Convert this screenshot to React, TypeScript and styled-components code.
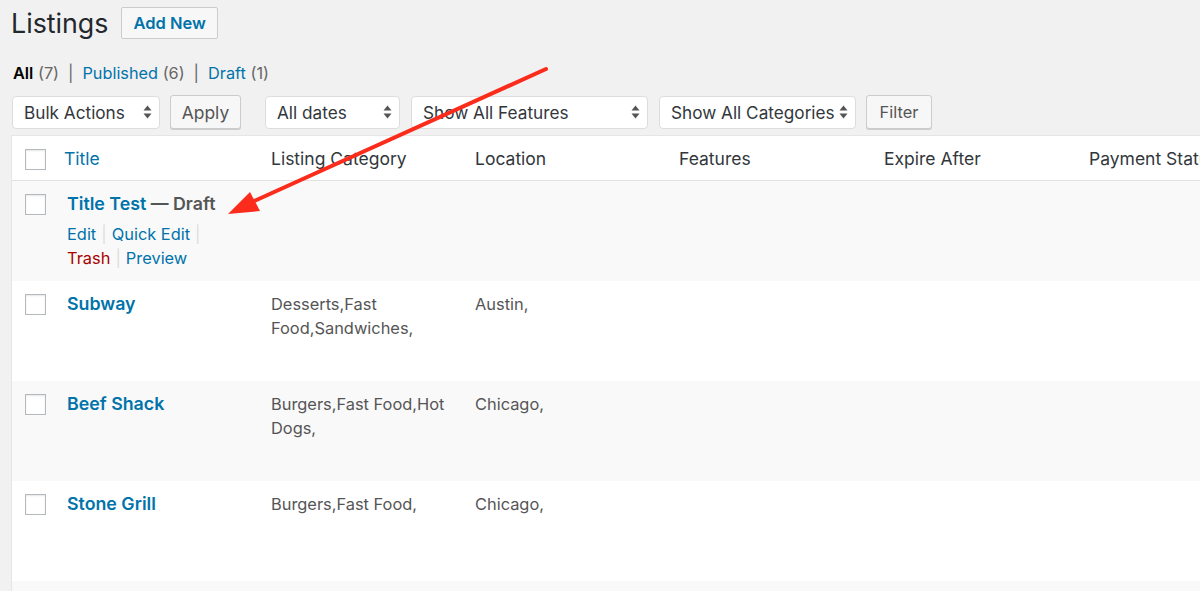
import styled, { createGlobalStyle } from 'styled-components';

const GlobalStyle = createGlobalStyle`
  html, body {
    margin: 0;
    padding: 0;
    background: #f1f1f1;
    overflow: hidden;
  }
  body {
    font-family: Inter, "Liberation Sans", Arial, sans-serif;
    color: #444;
    -webkit-font-smoothing: antialiased;
  }
`;

const Page = styled.div`
  position: relative;
  width: 1200px;
  height: 591px;
  padding-left: 11px;
  box-sizing: border-box;
  overflow: hidden;
`;

const TitleRow = styled.div`
  display: flex;
  align-items: center;
  gap: 13px;
  padding-top: 7px;
`;

const Heading = styled.h1`
  margin: 0;
  font-size: 26.8px;
  font-weight: 400;
  line-height: 32px;
  color: #23282d;
`;

const AddNew = styled.a`
  display: flex;
  align-items: center;
  height: 30px;
  padding: 0 11px;
  border: 1px solid #ccc;
  border-radius: 2px;
  background: #f7f7f7;
  color: #0073aa;
  font-size: 16.5px;
  font-weight: 600;
  text-decoration: none;
`;

const SubSub = styled.ul`
  display: flex;
  align-items: center;
  margin: 22px 0 0 2px;
  padding: 0;
  list-style: none;
  font-size: 16.3px;
  line-height: 24px;
  color: #666;
`;

const SubItem = styled.li<{ $current?: boolean }>`
  a {
    color: ${(p) => (p.$current ? '#000' : '#0073aa')};
    font-weight: ${(p) => (p.$current ? 600 : 400)};
    text-decoration: none;
  }
`;

const Sep = styled.span`
  margin: 0 9px;
  color: #666;
`;

const Toolbar = styled.div`
  display: flex;
  align-items: center;
  margin: 10px 0 0 1px;
`;

const Group = styled.div<{ $gap: number; $ml?: number }>`
  display: flex;
  align-items: center;
  gap: ${(p) => p.$gap}px;
  margin-left: ${(p) => p.$ml ?? 0}px;
`;

const Select = styled.div<{ $w: number }>`
  display: flex;
  align-items: center;
  justify-content: space-between;
  gap: 4px;
  box-sizing: border-box;
  width: ${(p) => p.$w}px;
  height: 33px;
  padding: 0 7px 0 11px;
  border: 1px solid #ddd;
  border-radius: 4px;
  background: #fff;
  color: #32373c;
  font-size: 17.2px;
  white-space: nowrap;
`;

const Button = styled.button<{ $w: number; $size?: number }>`
  box-sizing: border-box;
  width: ${(p) => p.$w}px;
  height: 34px;
  padding: 0;
  border: 1px solid #ccc;
  border-radius: 3px;
  background: #f7f7f7;
  box-shadow: 0 1px 0 #ccc;
  color: #555;
  font-family: inherit;
  font-size: ${(p) => p.$size ?? 17.4}px;
`;

const Table = styled.div`
  margin-top: 6px;
  width: 1300px;
  border: 1px solid #e5e5e5;
  background: #fff;
`;

const Row = styled.div<{ $bg?: string; $h: number; $head?: boolean }>`
  display: grid;
  grid-template-columns: 43px 206px 204px 204px 205px 205px 1fr;
  height: ${(p) => p.$h}px;
  background: ${(p) => p.$bg ?? '#fff'};
  border-bottom: ${(p) => (p.$head ? '1px solid #e1e1e1' : 'none')};
  box-sizing: border-box;
`;

const CheckCell = styled.div<{ $top: number }>`
  padding: ${(p) => p.$top}px 0 0 13px;
`;

const Checkbox = styled.span`
  display: block;
  width: 21px;
  height: 21px;
  box-sizing: border-box;
  border: 1px solid #b4b9be;
  background: #fff;
  box-shadow: inset 0 1px 2px rgba(0, 0, 0, 0.1);
`;

const HeadCell = styled.div<{ $pl?: number; $link?: boolean }>`
  padding: 11px 0 0 ${(p) => p.$pl ?? 10}px;
  font-size: 17.5px;
  line-height: 24px;
  color: ${(p) => (p.$link ? '#0073aa' : '#32373c')};
  white-space: nowrap;
`;

const Cell = styled.div<{ $pl?: number }>`
  padding: 11px 10px 0 ${(p) => p.$pl ?? 10}px;
  font-size: 16.4px;
  line-height: 24px;
  color: #555;
`;

const RowTitle = styled.div`
  font-size: 17.8px;
  font-weight: 600;
  line-height: 24px;
  color: #555;

  a {
    color: #0073aa;
    text-decoration: none;
  }
`;

const Actions = styled.div`
  margin-top: 6px;
  font-size: 16.4px;
  line-height: 24px;
  color: #ddd;
`;

const ActionLink = styled.a<{ $danger?: boolean }>`
  color: ${(p) => (p.$danger ? '#a00' : '#0073aa')};
  text-decoration: none;
`;

const Pipe = styled.span`
  margin: 0 5px;
  color: #ddd;
`;

const Overlay = styled.svg`
  position: absolute;
  top: 0;
  left: 0;
  pointer-events: none;
`;

const Updown = () => (
  <svg width="9" height="14" viewBox="0 0 9 14">
    <path d="M4.5 0.5 L8.5 5.5 H0.5 Z M4.5 13.5 L8.5 8.5 H0.5 Z" fill="#555" />
  </svg>
);

type Listing = {
  title: string;
  category: string;
  location: string;
  draft?: boolean;
};

const listings: Listing[] = [
  { title: 'Title Test', category: '', location: '', draft: true },
  { title: 'Subway', category: 'Desserts,Fast Food,Sandwiches,', location: 'Austin,' },
  { title: 'Beef Shack', category: 'Burgers,Fast Food,Hot Dogs,', location: 'Chicago,' },
  { title: 'Stone Grill', category: 'Burgers,Fast Food,', location: 'Chicago,' },
  { title: '', category: '', location: '' },
];

const columns = ['Listing Category', 'Location', 'Features', 'Expire After', 'Payment Status'];

export default function App() {
  return (
    <Page>
      <GlobalStyle />
      <TitleRow>
        <Heading>Listings</Heading>
        <AddNew href="#">Add New</AddNew>
      </TitleRow>

      <SubSub>
        <SubItem $current>
          <a href="#">All</a> (7)
        </SubItem>
        <Sep>|</Sep>
        <SubItem>
          <a href="#">Published</a> (6)
        </SubItem>
        <Sep>|</Sep>
        <SubItem>
          <a href="#">Draft</a> (1)
        </SubItem>
      </SubSub>

      <Toolbar>
        <Group $gap={10}>
          <Select $w={148}>
            Bulk Actions <Updown />
          </Select>
          <Button $w={71}>Apply</Button>
        </Group>
        <Group $gap={11} $ml={24}>
          <Select $w={135}>
            All dates <Updown />
          </Select>
          <Select $w={237}>
            Show All Features <Updown />
          </Select>
          <Select $w={197}>
            Show All Categories <Updown />
          </Select>
        </Group>
        <Group $gap={0} $ml={10}>
          <Button $w={66} $size={16.4}>
            Filter
          </Button>
        </Group>
      </Toolbar>

      <Table>
        <Row $h={45} $head>
          <CheckCell $top={13}>
            <Checkbox />
          </CheckCell>
          <HeadCell $pl={9} $link>
            Title
          </HeadCell>
          {columns.map((c) => (
            <HeadCell key={c}>{c}</HeadCell>
          ))}
        </Row>

        {listings.map((l, i) => (
          <Row key={i} $h={100} $bg={i % 2 === 0 ? '#f9f9f9' : '#fff'}>
            <CheckCell $top={13}>{l.title && <Checkbox />}</CheckCell>
            <Cell $pl={12}>
              {l.title && (
                <RowTitle>
                  <a href="#">{l.title}</a>
                  {l.draft && ' — Draft'}
                </RowTitle>
              )}
              {l.draft && (
                <Actions>
                  <ActionLink href="#">Edit</ActionLink>
                  <Pipe>|</Pipe>
                  <ActionLink href="#">Quick Edit</ActionLink>
                  <Pipe>|</Pipe>
                  <br />
                  <ActionLink href="#" $danger>
                    Trash
                  </ActionLink>
                  <Pipe>|</Pipe>
                  <ActionLink href="#">Preview</ActionLink>
                </Actions>
              )}
            </Cell>
            <Cell>{l.category}</Cell>
            <Cell>{l.location}</Cell>
            <Cell />
            <Cell />
            <Cell />
          </Row>
        ))}
      </Table>

      <Overlay width="1200" height="591" viewBox="0 0 1200 591">
        <line
          x1="546"
          y1="69"
          x2="252"
          y2="202"
          stroke="#fb2c1c"
          strokeWidth="4"
          strokeLinecap="round"
        />
        <polygon points="228,214 250,192 260,211" fill="#fb2c1c" />
      </Overlay>
    </Page>
  );
}
